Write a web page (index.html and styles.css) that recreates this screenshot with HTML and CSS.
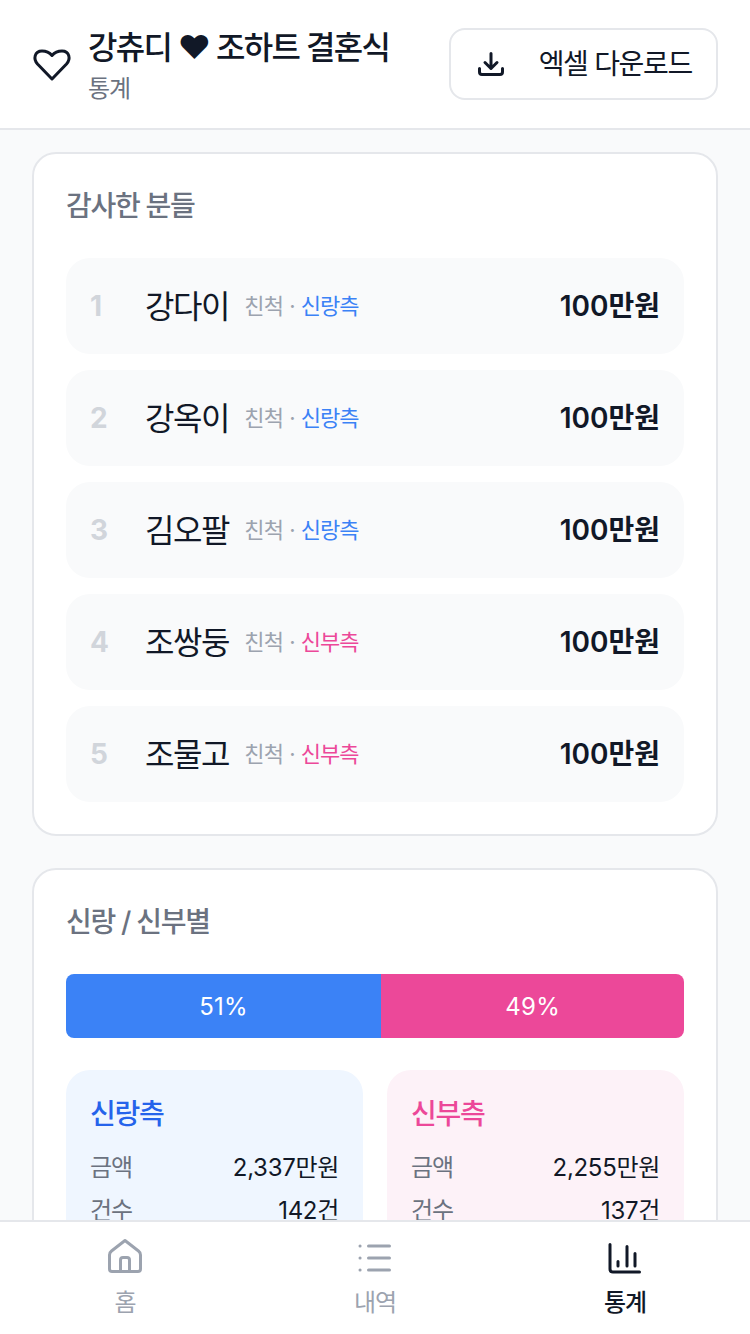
FILE: index.html
```html
<!DOCTYPE html>
<html lang="ko">
  <head>
    <meta charset="UTF-8" />
    <meta name="viewport" content="width=device-width, initial-scale=1.0" />
    <title>통계</title>
    <link rel="stylesheet" href="styles.css">
  </head>
  <body>
    <div class="app">
      <header class="top-bar">
        <div class="top-title">
          <svg class="heart-icon" viewBox="0 0 40 34" fill="none" stroke="currentColor" stroke-width="3" stroke-linejoin="round">
            <path d="M20 31 5.500 16C1 11 2.500 3 10 3 14 3 17.500 4.500 20 7.500 22.500 4.500 26 3 30 3 37.500 3 39 11 34.500 16z" />
          </svg>
          <div class="title-text">
            <h1>강츄디 ♥ 조하트 결혼식</h1>
            <p>통계</p>
          </div>
        </div>
        <button class="excel-btn">
          <svg viewBox="0 0 32 32" fill="none" stroke="currentColor" stroke-width="3" stroke-linecap="round" stroke-linejoin="round">
            <path d="M16 5.500V20.500M10 14.500l6 6 6-6" />
            <path d="M4.500 20.500V24Q4.500 26.500 7 26.500H25Q27.500 26.500 27.500 24V20.500" />
          </svg>
          <span>엑셀 다운로드</span>
        </button>
      </header>

      <main class="content">
        <section class="card">
          <h2>감사한 분들</h2>
          <ul class="rank-list">
            <li class="rank-row">
              <span class="rank-num">1</span>
              <span class="rank-name">강다이</span>
              <span class="rank-meta">친척 · <em class="groom">신랑측</em></span>
              <span class="rank-amount">100만원</span>
            </li>
            <li class="rank-row">
              <span class="rank-num">2</span>
              <span class="rank-name">강옥이</span>
              <span class="rank-meta">친척 · <em class="groom">신랑측</em></span>
              <span class="rank-amount">100만원</span>
            </li>
            <li class="rank-row">
              <span class="rank-num">3</span>
              <span class="rank-name">김오팔</span>
              <span class="rank-meta">친척 · <em class="groom">신랑측</em></span>
              <span class="rank-amount">100만원</span>
            </li>
            <li class="rank-row">
              <span class="rank-num">4</span>
              <span class="rank-name">조쌍둥</span>
              <span class="rank-meta">친척 · <em class="bride">신부측</em></span>
              <span class="rank-amount">100만원</span>
            </li>
            <li class="rank-row">
              <span class="rank-num">5</span>
              <span class="rank-name">조물고</span>
              <span class="rank-meta">친척 · <em class="bride">신부측</em></span>
              <span class="rank-amount">100만원</span>
            </li>
          </ul>
        </section>

        <section class="card">
          <h2>신랑 / 신부별</h2>
          <div class="ratio-bar">
            <div class="ratio-groom" style="width: 51%">51%</div>
            <div class="ratio-bride" style="width: 49%">49%</div>
          </div>
          <div class="side-grid">
            <div class="side-box side-groom">
              <h3>신랑측</h3>
              <div class="side-line"><span>금액</span><b>2,337만원</b></div>
              <div class="side-line"><span>건수</span><b>142건</b></div>
            </div>
            <div class="side-box side-bride">
              <h3>신부측</h3>
              <div class="side-line"><span>금액</span><b>2,255만원</b></div>
              <div class="side-line"><span>건수</span><b>137건</b></div>
            </div>
          </div>
        </section>
      </main>

      <nav class="bottom-nav">
        <a class="nav-item">
          <svg viewBox="0 0 36 36" fill="none" stroke="currentColor" stroke-width="3" stroke-linecap="round" stroke-linejoin="round">
            <path d="M18 2.500 4.500 13Q2.500 14.500 2.500 17V31Q2.500 33.500 5 33.500H31Q33.500 33.500 33.500 31V17Q33.500 14.500 31.500 13z" />
            <path d="M13.500 33.500V22Q13.500 19.500 16 19.500H20Q22.500 19.500 22.500 22V33.500" />
          </svg>
          <span>홈</span>
        </a>
        <a class="nav-item">
          <svg viewBox="0 0 36 36" fill="none" stroke="currentColor" stroke-width="3" stroke-linecap="round">
            <path d="M11.500 8H32.500M11.500 20H32.500M11.500 32H32.500" />
            <path d="M3 8h.1M3 20h.1M3 32h.1" />
          </svg>
          <span>내역</span>
        </a>
        <a class="nav-item active">
          <svg viewBox="0 0 36 36" fill="none" stroke="currentColor" stroke-width="3" stroke-linecap="round" stroke-linejoin="round">
            <path d="M3 6.500V31Q3 34 6 34H32.500" />
            <path d="M11 23.500V28M20 8.500V28M28 15.500V28" />
          </svg>
          <span>통계</span>
        </a>
      </nav>
    </div>
  </body>
</html>
```

FILE: styles.css
```css
* {
  margin: 0;
  padding: 0;
  box-sizing: border-box;
  font-family: "Inter", "Noto Sans CJK KR", sans-serif;
}

body {
  background: #f9fafb;
  color: #111827;
  overflow: hidden;
}

.app {
  display: flex;
  flex-direction: column;
  height: 1334px;
}

/* Top bar */
.top-bar {
  flex: none;
  display: flex;
  justify-content: space-between;
  align-items: center;
  height: 130px;
  padding: 0 32px;
  background: #fff;
  border-bottom: 2px solid #e5e7eb;
}

.top-title {
  display: flex;
  align-items: center;
  gap: 16px;
}

.heart-icon {
  width: 40px;
  height: 34px;
  margin-top: 2px;
}

.title-text {
  padding-top: 4px;
}

.top-title h1 {
  font-size: 32px;
  line-height: 40px;
  font-weight: 500;
  letter-spacing: -1.7px;
  white-space: nowrap;
}

.top-title p {
  margin-top: 5px;
  font-size: 24px;
  line-height: 32px;
  letter-spacing: -1px;
  color: #6b7280;
}

.excel-btn {
  display: flex;
  align-items: center;
  gap: 32px;
  height: 72px;
  padding: 0 24px;
  background: #fff;
  border: 2px solid #e5e7eb;
  border-radius: 16px;
  font-size: 28px;
  letter-spacing: -1.3px;
  color: #111827;
}

.excel-btn svg {
  width: 32px;
  height: 32px;
}

.excel-btn span {
  padding-bottom: 4px;
}

/* Cards */
.content {
  flex: 1;
  min-height: 0;
  overflow: hidden;
  display: flex;
  flex-direction: column;
  gap: 32px;
  padding: 22px 32px 0;
}

.card {
  flex: none;
  padding: 32px;
  background: #fff;
  border: 2px solid #e5e7eb;
  border-radius: 24px;
}

.card h2 {
  font-size: 28px;
  line-height: 40px;
  font-weight: 500;
  letter-spacing: -1.3px;
  color: #6b7280;
  margin-bottom: 32px;
}

.rank-list {
  list-style: none;
  display: flex;
  flex-direction: column;
  gap: 16px;
}

.rank-row {
  display: flex;
  align-items: center;
  height: 96px;
  padding: 0 24px 4px;
  background: #f9fafb;
  border-radius: 24px;
}

.rank-num {
  width: 55px;
  padding-top: 4px;
  font-size: 28px;
  font-weight: 700;
  color: #d1d5db;
}

.rank-name {
  font-size: 32px;
  letter-spacing: -1.4px;
  margin-right: 15px;
}

.rank-meta {
  font-size: 22px;
  letter-spacing: -0.5px;
  color: #9ca3af;
}

.rank-meta em {
  font-style: normal;
  letter-spacing: -1px;
}

.groom {
  color: #3b82f6;
}

.bride {
  color: #ec4899;
}

.rank-amount {
  margin-left: auto;
  font-size: 28px;
  font-weight: 600;
}

/* Groom / bride split */
.ratio-bar {
  display: flex;
  height: 64px;
  border-radius: 8px;
  overflow: hidden;
  color: #fff;
  font-size: 24px;
  letter-spacing: 0.3px;
  line-height: 66px;
  text-align: center;
}

.ratio-groom {
  background: #3b82f6;
}

.ratio-bride {
  background: #ec4899;
}

.side-grid {
  display: grid;
  grid-template-columns: 1fr 1fr;
  gap: 24px;
  margin-top: 32px;
}

.side-box {
  padding: 24px;
  border-radius: 24px;
}

.side-groom {
  background: #eff6ff;
}

.side-bride {
  background: #fdf2f8;
}

.side-box h3 {
  font-size: 28px;
  line-height: 40px;
  font-weight: 500;
  letter-spacing: -1.3px;
  margin-bottom: 18px;
}

.side-groom h3 {
  color: #2563eb;
}

.side-bride h3 {
  color: #ec4899;
}

.side-line {
  display: flex;
  justify-content: space-between;
  font-size: 24px;
  line-height: 32px;
  margin-bottom: 11px;
}

.side-line span {
  letter-spacing: -1px;
  color: #6b7280;
}

.side-line b {
  font-weight: 400;
  letter-spacing: -0.3px;
}

/* Bottom nav */
.bottom-nav {
  flex: none;
  display: grid;
  grid-template-columns: repeat(3, 1fr);
  height: 114px;
  padding-top: 16px;
  background: #fff;
  border-top: 2px solid #e5e7eb;
}

.nav-item {
  display: flex;
  flex-direction: column;
  align-items: center;
  gap: 13px;
  font-size: 24px;
  line-height: 32px;
  letter-spacing: -1px;
  color: #9ca3af;
}

.nav-item svg {
  width: 36px;
  height: 36px;
}

.nav-item.active {
  color: #111827;
  font-weight: 500;
}
```
